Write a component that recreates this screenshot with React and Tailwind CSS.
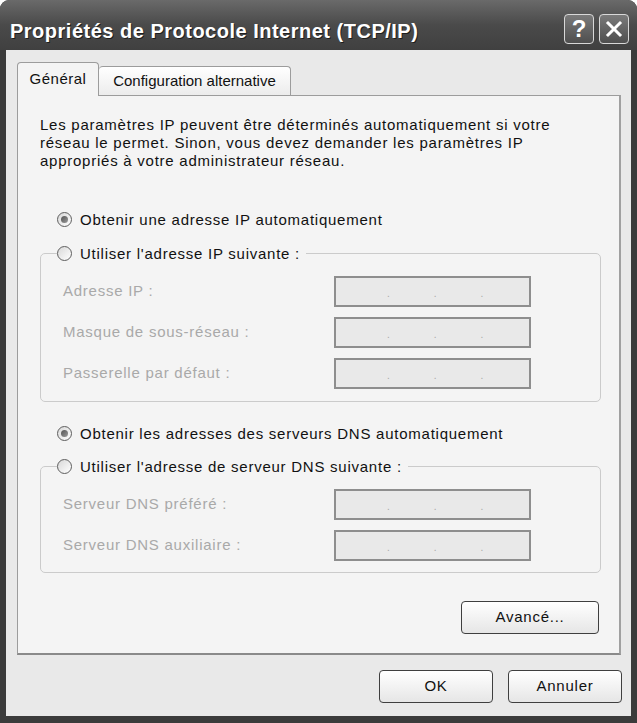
import React, { useState } from 'react';

const font = { fontFamily: '"Liberation Sans", Arial, sans-serif' };

const Radio = ({ checked, onClick, children }) => (
  <button
    type="button"
    onClick={onClick}
    className="flex items-center gap-[8px] h-[16px] text-[15px] tracking-[0.75px] text-[#111] leading-none bg-[#f4f4f4] pr-[6px] cursor-default"
  >
    <span className="w-[15px] h-[15px] rounded-full border border-[#5e5e5e] bg-gradient-to-br from-[#d8d8d8] to-white flex items-center justify-center">
      {checked && <span className="w-[7px] h-[7px] rounded-full bg-gradient-to-br from-[#555] to-[#9a9a9a]" />}
    </span>
    <span>{children}</span>
  </button>
);

const IpField = ({ label }) => (
  <div className="flex items-center h-[31px]">
    <div className="w-[293px] text-[15px] tracking-[0.75px] text-[#a9a9a9] pl-[22px]">{label}</div>
    <div className="w-[197px] h-[31px] border-2 border-[#8e8e8e] bg-[#e9e9e9] flex items-end pb-[6px]">
      <span className="ml-[51px] text-[10px] leading-none text-[#a8a8a8]">.</span>
      <span className="ml-[44px] text-[10px] leading-none text-[#a8a8a8]">.</span>
      <span className="ml-[44px] text-[10px] leading-none text-[#a8a8a8]">.</span>
    </div>
  </div>
);

const WinButton = ({ children, className = '' }) => (
  <button
    type="button"
    className={`h-[33px] rounded-[4px] border border-[#3f3f3f] bg-gradient-to-b from-white to-[#e6e6e6] text-[15px] tracking-[0.75px] text-[#111] ${className}`}
  >
    {children}
  </button>
);

export default function App() {
  const [tab, setTab] = useState('general');
  const [ipMode, setIpMode] = useState('auto');
  const [dnsMode, setDnsMode] = useState('auto');

  return (
    <div className="w-[637px] h-[723px] bg-white" style={font}>
      <div className="w-full h-full rounded-t-[9px] bg-[#3b3b3b] flex flex-col overflow-hidden">
        {/* Title bar */}
        <div className="h-[50px] shrink-0 flex items-center justify-between pl-[10px] pr-[8px] bg-gradient-to-b from-[#6a6a6a] via-[#4a4a4a] to-[#404040]">
          <div
            className="text-white font-bold text-[20px] tracking-[0.5px] pt-[11px]"
            style={{ textShadow: '1px 1px 0 #1e1e1e' }}
          >
            Propriétés de Protocole Internet (TCP/IP)
          </div>
          <div className="flex gap-[5px] pt-[8px]">
            <div className="w-[30px] h-[30px] rounded-[4px] border border-[#d8d8d8] bg-gradient-to-b from-[#7a7a7a] to-[#4f4f4f] flex items-center justify-center text-white text-[24px] font-bold leading-none">
              ?
            </div>
            <div className="w-[30px] h-[30px] rounded-[4px] border border-[#d8d8d8] bg-gradient-to-b from-[#7a7a7a] to-[#4f4f4f] flex items-center justify-center">
              <svg width="18" height="18" viewBox="0 0 18 18">
                <path d="M3 3 L15 15 M15 3 L3 15" stroke="white" strokeWidth="3" strokeLinecap="square" />
              </svg>
            </div>
          </div>
        </div>

        {/* Body */}
        <div className="flex-1 mx-[6px] mb-[7px] bg-[#e9e9e9] flex flex-col">
          <div className="pl-[11px] pr-[10px] pt-[12px]">
            {/* Tabs */}
            <div className="flex items-end h-[33px] relative z-10">
              <button
                type="button"
                onClick={() => setTab('general')}
                className="h-[34px] -mb-px w-[82px] rounded-t-[4px] border border-b-0 border-[#9c9c9c] bg-[#f4f4f4] text-[15px] tracking-[0.5px] text-[#111]"
              >
                Général
              </button>
              <button
                type="button"
                onClick={() => setTab('alt')}
                className="h-[29px] w-[192px] rounded-t-[4px] border border-b-0 border-l-0 border-[#9c9c9c] bg-gradient-to-b from-white to-[#ececec] text-[15px] text-[#111] px-[4px] whitespace-nowrap"
              >
                Configuration alternative
              </button>
            </div>

            {/* Panel */}
            <div className="h-[560px] border border-[#9c9c9c] border-b-2 border-r-2 border-b-[#8a8a8a] border-r-[#a0a0a0] bg-[#f4f4f4] pl-[22px] pr-[19px] pt-[20px]">
              {tab === 'general' ? (
                <>
                  <p className="text-[15px] leading-[18px] tracking-[0.75px] text-[#111] w-[545px]">
                    Les paramètres IP peuvent être déterminés automatiquement si votre réseau le permet. Sinon, vous devez demander les paramètres IP appropriés à votre administrateur réseau.
                  </p>

                  <div className="mt-[41px] pl-[17px] h-[16px] flex items-center">
                    <Radio checked={ipMode === 'auto'} onClick={() => setIpMode('auto')}>
                      Obtenir une adresse IP automatiquement
                    </Radio>
                  </div>

                  <fieldset className="mt-[18px] w-[561px] h-[157px] border border-[#cbcbcb] rounded-[5px] pt-[15px] px-0 pb-0 m-0">
                    <legend className="ml-[16px]">
                      <Radio checked={ipMode === 'manual'} onClick={() => setIpMode('manual')}>
                        Utiliser l'adresse IP suivante :
                      </Radio>
                    </legend>
                    <div className="flex flex-col gap-[10px]">
                      <IpField label="Adresse IP :" />
                      <IpField label="Masque de sous-réseau :" />
                      <IpField label="Passerelle par défaut :" />
                    </div>
                  </fieldset>

                  <div className="mt-[23px] pl-[17px] h-[16px] flex items-center">
                    <Radio checked={dnsMode === 'auto'} onClick={() => setDnsMode('auto')}>
                      Obtenir les adresses des serveurs DNS automatiquement
                    </Radio>
                  </div>

                  <fieldset className="mt-[17px] w-[561px] h-[115px] border border-[#cbcbcb] rounded-[5px] pt-[15px] px-0 pb-0 m-0">
                    <legend className="ml-[16px]">
                      <Radio checked={dnsMode === 'manual'} onClick={() => setDnsMode('manual')}>
                        Utiliser l'adresse de serveur DNS suivante :
                      </Radio>
                    </legend>
                    <div className="flex flex-col gap-[10px]">
                      <IpField label="Serveur DNS préféré :" />
                      <IpField label="Serveur DNS auxiliaire :" />
                    </div>
                  </fieldset>

                  <div className="flex justify-end mt-[28px] pr-[1px]">
                    <WinButton className="w-[138px]">Avancé...</WinButton>
                  </div>
                </>
              ) : (
                <p className="text-[15px] leading-[18px] tracking-[0.75px] text-[#111]">
                  Si cet ordinateur est utilisé sur plusieurs réseaux, entrez les paramètres IP alternatifs ci-dessous.
                </p>
              )}
            </div>
          </div>

          {/* Dialog buttons */}
          <div className="flex justify-end gap-[15px] pr-[9px] mt-[15px]">
            <WinButton className="w-[114px]">OK</WinButton>
            <WinButton className="w-[114px]">Annuler</WinButton>
          </div>
        </div>
      </div>
    </div>
  );
}
